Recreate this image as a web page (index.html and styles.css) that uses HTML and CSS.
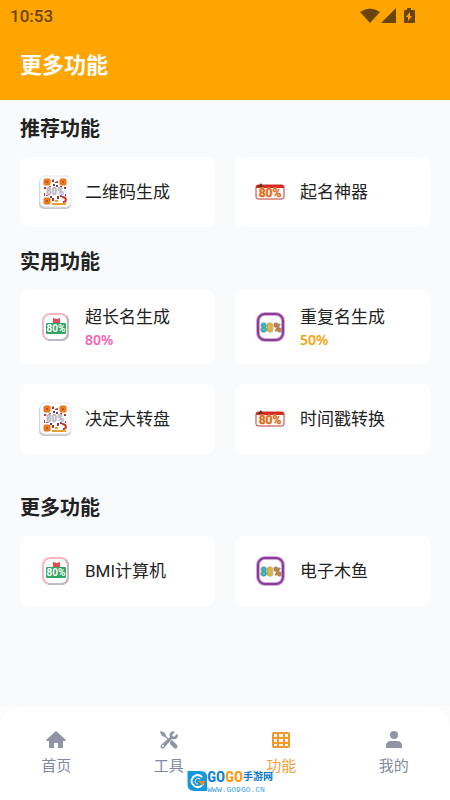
FILE: index.html
```
<!DOCTYPE html>
<html lang="zh-CN">
<head>
    <meta charset="UTF-8">
    <meta name="viewport" content="width=device-width, initial-scale=1">
    <title>更多功能</title>
    <link rel="stylesheet" href="styles.css">
</head>
<body>
    <!-- shared icons -->
    <svg class="sprite" aria-hidden="true">
        <symbol id="icon-qr" viewBox="0 0 34 34">
            <rect x="1" y="3" width="32" height="31" rx="5" fill="#c4c5cf"/>
            <rect x="2" y="1" width="31" height="31" rx="5" fill="#fff" stroke="#e9e5e5" stroke-width="1"/>
            <g fill="#ee7a16" stroke="#e8701c" stroke-width="1">
                <rect x="6" y="4" width="6" height="6" rx="1"/>
                <rect x="22" y="4" width="6" height="6" rx="1"/>
                <rect x="6" y="23" width="6" height="6" rx="1"/>
            </g>
            <path d="M8 6h2v2H8zM24 6h2v2h-2zM8 25h2v2H8z" fill="#c8501a"/>
            <path d="M14 5l2-1v3h-2zM17 7l3-1v2h-3zM6 12h2v2H6zM11 11h2v2h-2zM26 12h2v2h-2zM6 18h1v3H6zM14 23h2v3h-2zM19 21h2v3h-2zM22 11h2v2h-2zM27 19h1v2h-1z" fill="#b5322c"/>
            <path d="M15 9h2v2h-2zM18 10h2v2h-2zM8 20h3v1H8zM12 21h2v2h-2zM22 20h2v2h-2z" fill="#713b7a"/>
            <path d="M14 29h14M17 26h3" stroke="#eda02a" stroke-width="2"/>
            <path d="M24 22c5 0 5 5 1 5" fill="none" stroke="#d4331f" stroke-width="2"/>
            <text x="17" y="20" text-anchor="middle" class="qr-text">80%</text>
        </symbol>
        <symbol id="icon-tag" viewBox="0 0 34 34">
            <rect x="3" y="10" width="28" height="14" rx="2" fill="#fff" stroke="#bd3b32" stroke-width="1"/>
            <path d="M3 13v-1q0-2 2-2h24q2 0 2 2v1z" fill="#d92a20"/>
            <path d="M5 12l3-4 2 4z" fill="#5c3124"/>
            <text x="17" y="22" text-anchor="middle" class="tag-text">80%</text>
        </symbol>
        <symbol id="icon-green" viewBox="0 0 34 34">
            <rect x="5" y="4" width="25" height="26" rx="7" fill="#fff" stroke="#f2b8c0" stroke-width="2"/>
            <path d="M28 6q2 2 2 6v11q0 7-7 7H10" fill="none" stroke="#b9bcc0" stroke-width="2"/>
            <path d="M15 14V8l4 1 3-1v5h-5v1" fill="#e34a54"/>
            <rect x="8" y="13" width="20" height="11" rx="1" fill="#32a563"/>
            <text x="18" y="22" text-anchor="middle" class="green-text">80%</text>
        </symbol>
        <symbol id="icon-purple" viewBox="0 0 34 34">
            <rect x="5" y="4" width="25" height="26" rx="7" fill="#fff" stroke="#cfa9d8" stroke-width="4"/>
            <rect x="5" y="4" width="25" height="26" rx="7" fill="none" stroke="#8c3c98" stroke-width="2"/>
            <text x="18" y="22" text-anchor="middle" class="purple-text"><tspan fill="#20b5c5">8</tspan><tspan fill="#f0b41a">0</tspan><tspan fill="#d07830">%</tspan></text>
        </symbol>
    </svg>

    <div class="app">
        <header class="header">
            <div class="status-bar">
                <span>10:53</span>
                <svg class="status-icons" viewBox="0 0 56 18" aria-hidden="true">
                    <path d="M0 5Q10-2 20 5L10 16z"/>
                    <path d="M36 1v15H21z"/>
                    <path fill-rule="evenodd" d="M47 1h4v2h3q1 0 1 1v11q0 1-1 1h-9q-1 0-1-1V4q0-1 1-1h2zM50 5l-4 5h2v4l4-5h-2z"/>
                </svg>
            </div>
            <h1>更多功能</h1>
        </header>

        <main class="content">
            <section class="section">
                <h2>推荐功能</h2>
                <div class="grid">
                    <a href="#qrcode" class="card">
                        <svg class="card-icon"><use href="#icon-qr"/></svg>
                        <span class="card-name">二维码生成</span>
                    </a>
                    <a href="#naming" class="card">
                        <svg class="card-icon"><use href="#icon-tag"/></svg>
                        <span class="card-name">起名神器</span>
                    </a>
                </div>
            </section>

            <section class="section section-tall">
                <h2>实用功能</h2>
                <div class="grid">
                    <a href="#longname" class="card">
                        <svg class="card-icon"><use href="#icon-green"/></svg>
                        <span class="card-name">超长名生成<strong class="rate pink">80%</strong></span>
                    </a>
                    <a href="#repeatname" class="card">
                        <svg class="card-icon"><use href="#icon-purple"/></svg>
                        <span class="card-name">重复名生成<strong class="rate orange">50%</strong></span>
                    </a>
                    <a href="#wheel" class="card">
                        <svg class="card-icon"><use href="#icon-qr"/></svg>
                        <span class="card-name">决定大转盘</span>
                    </a>
                    <a href="#timestamp" class="card">
                        <svg class="card-icon"><use href="#icon-tag"/></svg>
                        <span class="card-name">时间戳转换</span>
                    </a>
                </div>
            </section>

            <section class="section">
                <h2>更多功能</h2>
                <div class="grid">
                    <a href="#bmi" class="card">
                        <svg class="card-icon"><use href="#icon-green"/></svg>
                        <span class="card-name">BMI计算机</span>
                    </a>
                    <a href="#muyu" class="card">
                        <svg class="card-icon"><use href="#icon-purple"/></svg>
                        <span class="card-name">电子木鱼</span>
                    </a>
                </div>
            </section>
        </main>

        <nav class="tab-bar">
            <a href="#home" class="tab">
                <svg viewBox="0 0 20 20"><path d="M10 1l10 9-1 1h-2v7h-5v-5H8v5H3v-7H1l-1-1z"/></svg>
                <span>首页</span>
            </a>
            <a href="#tools" class="tab">
                <svg viewBox="0 0 20 20">
                    <path d="M2 1l4 2 1 3 4 4-1 1-4-4-3-1-2-4z"/>
                    <path d="M11 12l2-2 5 5q1 2 0 3t-3 0l-4-4z"/>
                    <path fill-rule="evenodd" d="M18 4l-3 3-2-2 3-3q-3-2-5 1-1 2 0 4l-9 8q-1 2 0 3t3 0l8-9q3 1 5-1 2-3 0-4zM4 15a1 1 0 1 1 0 2 1 1 0 0 1 0-2z"/>
                </svg>
                <span>工具</span>
            </a>
            <a href="#features" class="tab active" aria-current="page">
                <svg viewBox="0 0 20 20"><path fill-rule="evenodd" d="M3 2h14q2 0 2 2v12q0 2-2 2H3q-2 0-2-2V4q0-2 2-2zM3 4v3h3V4zM8 4v3h4V4zM14 4v3h3V4zM3 9v3h3V9zM8 9v3h4V9zM14 9v3h3V9zM3 14v2h3v-2zM8 14v2h4v-2zM14 14v2h3v-2z"/></svg>
                <span>功能</span>
            </a>
            <a href="#mine" class="tab">
                <svg viewBox="0 0 20 20"><circle cx="10" cy="5" r="4"/><path d="M2 18v-2q0-5 5-5h6q5 0 5 5v2z"/></svg>
                <span>我的</span>
            </a>
            <div class="watermark">
                <svg viewBox="0 0 20 20" aria-hidden="true">
                    <path d="M0 0h13q7 0 7 7v13H7q-7 0-7-7z" fill="#1597dc"/>
                    <path d="M15 6q-5-4-9 0-4 5 1 9 5 3 9-2" fill="none" stroke="#fff" stroke-width="2"/>
                    <path d="M13 8q-3-2-5 1-1 4 3 4" fill="none" stroke="#fff" stroke-width="1"/>
                    <path d="M10 10h8l-3 5-2-3z" fill="#f68b1f"/>
                </svg>
                <div>
                    <div class="watermark-name"><b class="go-blue">GO</b><b class="go-orange">GO</b><b class="go-cn">手游网</b></div>
                    <div class="watermark-url">WWW.GO9GO.CN</div>
                </div>
            </div>
        </nav>
    </div>
</body>
</html>
```
FILE: styles.css
```
* {
    box-sizing: border-box;
}
body {
    font-family: Roboto, "Noto Sans CJK SC", sans-serif;
    margin: 0;
    background: #fdfdfe;
    color: #222;
}
a {
    color: inherit;
    text-decoration: none;
}
.sprite {
    display: none;
}
.app {
    display: flex;
    flex-direction: column;
    min-height: 100vh;
}
.header {
    background: #ffa500;
    padding-bottom: 18px;
}
.status-bar {
    display: flex;
    justify-content: space-between;
    align-items: center;
    height: 32px;
    padding: 0 34px 0 10px;
    font-size: 17px;
    font-weight: 500;
    color: #6b4508;
}
.status-icons {
    width: 56px;
    height: 18px;
    fill: #6b4508;
}
.header h1 {
    margin: 18px 20px 0;
    font-size: 22px;
    line-height: 32px;
    font-weight: 700;
    color: #fff;
}
.content {
    flex: 1;
    padding: 15px 20px 0;
    background: #f8fafc;
}
.section {
    margin-bottom: 21px;
}
.section-tall {
    padding-bottom: 19px;
}
.section h2 {
    margin: 0 0 14px;
    font-size: 20px;
    line-height: 28px;
    font-weight: 700;
}
.grid {
    display: grid;
    grid-template-columns: 1fr 1fr;
    gap: 20px;
}
.card {
    display: flex;
    align-items: center;
    gap: 13px;
    min-height: 70px;
    padding: 14px 18px;
    background: #fff;
    border-radius: 8px;
}
.card-icon {
    flex: none;
    width: 34px;
    height: 34px;
}
.card-name {
    font-size: 17px;
    line-height: 26px;
}
.rate {
    display: block;
    font-family: "Noto Sans", sans-serif;
    font-size: 14px;
    font-weight: 600;
    line-height: 20px;
}
.pink {
    color: #f562b0;
}
.orange {
    color: #f5a30c;
}

/* lettering inside the card icons */
.qr-text {
    font: bold 11px "Roboto Condensed", Roboto, sans-serif;
    fill: #b5b2bd;
    stroke: #f4f2f5;
    stroke-width: 1px;
    paint-order: stroke;
}
.tag-text {
    font: bold 12px Roboto, sans-serif;
    fill: #dd6a22;
    stroke: #f6c9a0;
    stroke-width: 1px;
    paint-order: stroke;
}
.green-text {
    font: bold 10px Roboto, sans-serif;
    fill: #fff;
}
.purple-text {
    font: bold 13px "Roboto Condensed", Roboto, sans-serif;
    stroke: #8a8f80;
    stroke-width: 1px;
    paint-order: stroke;
}

.tab-bar {
    position: relative;
    display: flex;
    height: 94px;
    padding-top: 24px;
    background: #fff;
    border-radius: 20px 20px 0 0;
    box-shadow: 0 0 2px rgba(0,0,0,0.05);
}
.tab {
    flex: 1;
    display: flex;
    flex-direction: column;
    align-items: center;
    gap: 5px;
    font-size: 15px;
    line-height: 22px;
    color: #8289a3;
}
.tab svg {
    width: 20px;
    height: 20px;
    fill: #9094a6;
}
.tab.active {
    color: #f2a03c;
}
.tab.active svg {
    fill: #f5972a;
}
.watermark {
    position: absolute;
    left: 50%;
    bottom: 6px;
    transform: translateX(-44%);
    display: flex;
    align-items: center;
}
.watermark > svg {
    width: 20px;
    height: 20px;
}
.watermark-name {
    display: flex;
    align-items: center;
    height: 18px;
    font-family: "Roboto Condensed", Roboto, "Noto Sans CJK SC", sans-serif;
    font-size: 15px;
    line-height: 18px;
}
.go-blue {
    color: #0c83d2;
}
.go-orange {
    color: #fb9a0c;
}
.go-cn {
    font-size: 10px;
    color: #0c78c8;
}
.watermark-url {
    font-family: "Liberation Mono", monospace;
    font-size: 8px;
    line-height: 8px;
    color: #3f9fdc;
}
```
